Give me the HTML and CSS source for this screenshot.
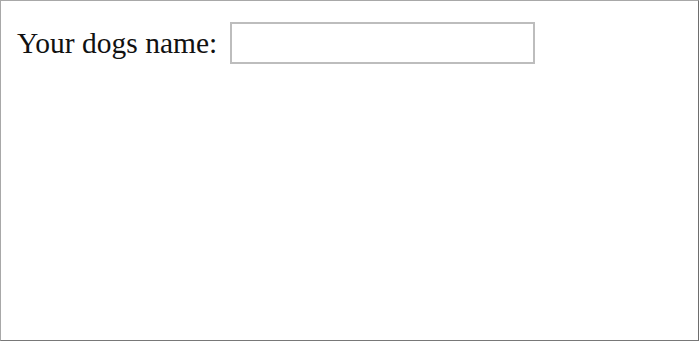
FILE: index.html
```html
<!DOCTYPE html>
<html>
<head>
<meta charset="utf-8">
<link rel="stylesheet" href="styles.css">
</head>
<body>
<div class="frame">
  <form class="row">
    <label class="label" for="dog">Your dogs name:</label>
    <input class="field" id="dog" type="text">
  </form>
</div>
</body>
</html>
```
FILE: styles.css
```css
html, body {
  margin: 0;
  padding: 0;
  background: #ffffff;
}
.frame {
  box-sizing: border-box;
  width: 699px;
  height: 341px;
  border-style: solid;
  border-width: 1px;
  border-color: #a8a8a8 #6e6e6e #787878 #a8a8a8;
  padding: 21px 16px 0 16px;
}
.row {
  display: flex;
  align-items: center;
  gap: 13px;
  margin: 0;
}
.label {
  font-family: "Liberation Serif", "Times New Roman", serif;
  font-size: 29.5px;
  color: #111111;
}
.field {
  box-sizing: border-box;
  width: 305px;
  height: 42px;
  margin: 0;
  border: 2px solid #bdbdbd;
  background: #ffffff;
  padding: 0 4px;
  font-family: "Liberation Serif", serif;
  font-size: 20px;
  outline: none;
}
```
